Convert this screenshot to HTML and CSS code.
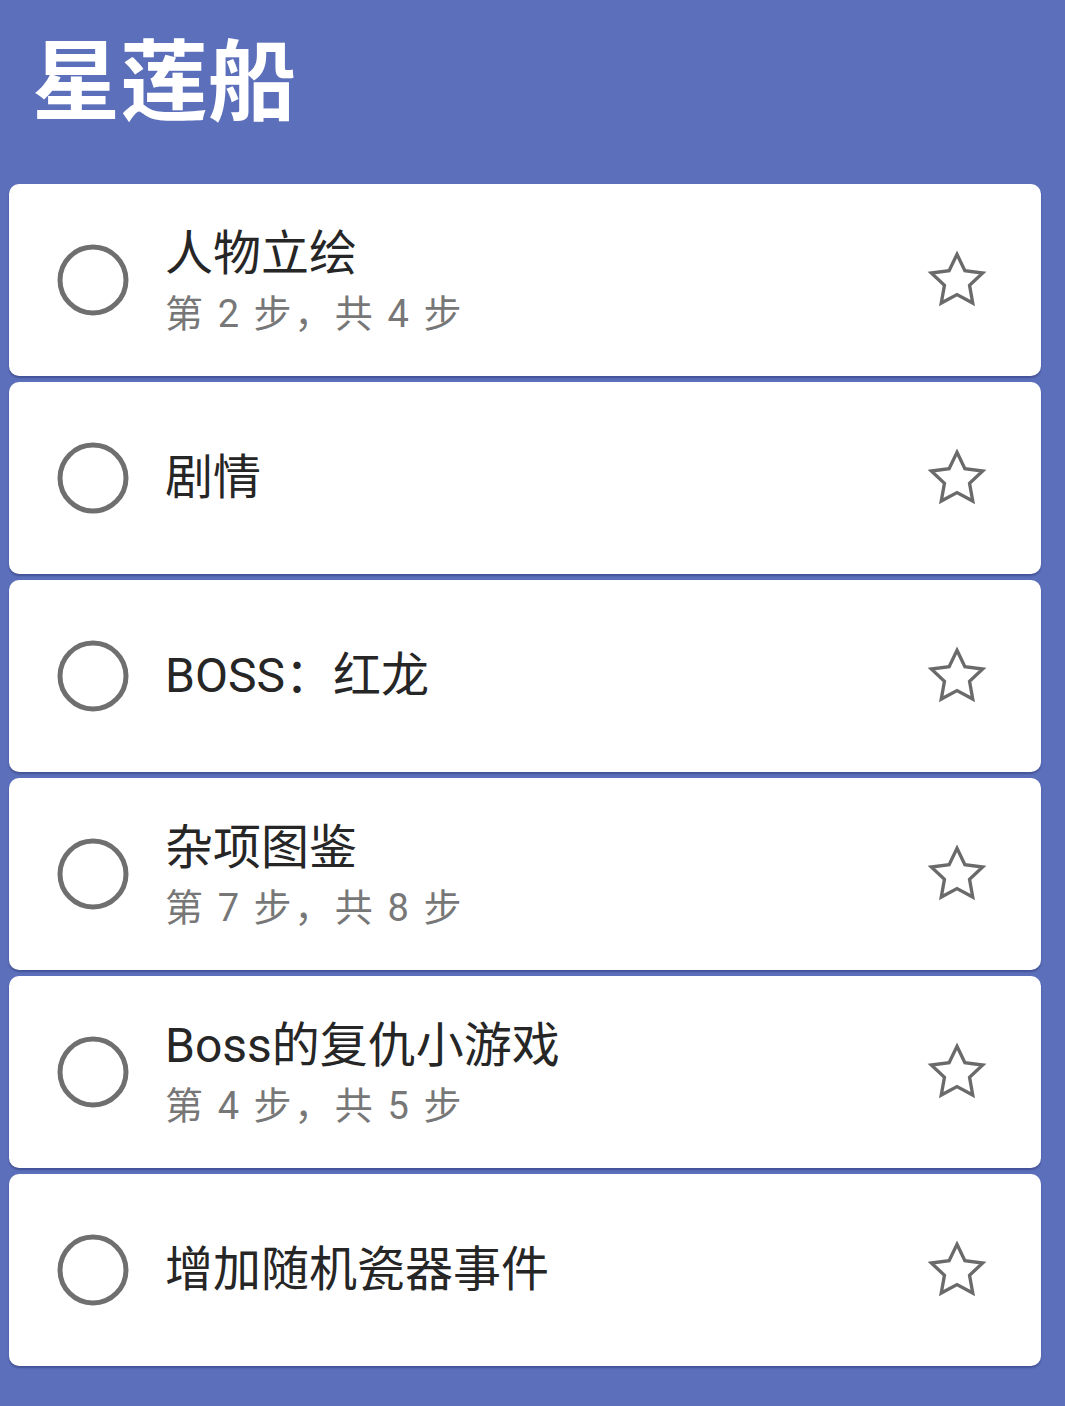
FILE: index.html
```html
<!DOCTYPE html>
<html lang="zh">
<head>
    <meta charset="UTF-8">
    <meta name="viewport" content="width=device-width, initial-scale=1.0">
    <title>星莲船</title>
    <link rel="stylesheet" href="styles.css">
</head>
<body>
    <header class="top-bar">
        <h1>星莲船</h1>
    </header>

    <div class="task-list">
        <div class="task-card">
            <svg class="check" viewBox="0 0 72 72"><circle cx="36" cy="36" r="33" /></svg>
            <div class="task-text">
                <div class="task-title">人物立绘</div>
                <div class="task-steps">第 2 步，共 4 步</div>
            </div>
            <svg class="star" viewBox="0 0 24 24"><path d="M12 3.2l2.7 5.6 6.1.8-4.5 4.2 1.1 6.1L12 17l-5.4 2.9 1.1-6.1-4.5-4.2 6.1-.8z" /></svg>
        </div>

        <div class="task-card">
            <svg class="check" viewBox="0 0 72 72"><circle cx="36" cy="36" r="33" /></svg>
            <div class="task-text">
                <div class="task-title">剧情</div>
            </div>
            <svg class="star" viewBox="0 0 24 24"><path d="M12 3.2l2.7 5.6 6.1.8-4.5 4.2 1.1 6.1L12 17l-5.4 2.9 1.1-6.1-4.5-4.2 6.1-.8z" /></svg>
        </div>

        <div class="task-card">
            <svg class="check" viewBox="0 0 72 72"><circle cx="36" cy="36" r="33" /></svg>
            <div class="task-text">
                <div class="task-title">BOSS：红龙</div>
            </div>
            <svg class="star" viewBox="0 0 24 24"><path d="M12 3.2l2.7 5.6 6.1.8-4.5 4.2 1.1 6.1L12 17l-5.4 2.9 1.1-6.1-4.5-4.2 6.1-.8z" /></svg>
        </div>

        <div class="task-card">
            <svg class="check" viewBox="0 0 72 72"><circle cx="36" cy="36" r="33" /></svg>
            <div class="task-text">
                <div class="task-title">杂项图鉴</div>
                <div class="task-steps">第 7 步，共 8 步</div>
            </div>
            <svg class="star" viewBox="0 0 24 24"><path d="M12 3.2l2.7 5.6 6.1.8-4.5 4.2 1.1 6.1L12 17l-5.4 2.9 1.1-6.1-4.5-4.2 6.1-.8z" /></svg>
        </div>

        <div class="task-card">
            <svg class="check" viewBox="0 0 72 72"><circle cx="36" cy="36" r="33" /></svg>
            <div class="task-text">
                <div class="task-title">Boss的复仇小游戏</div>
                <div class="task-steps">第 4 步，共 5 步</div>
            </div>
            <svg class="star" viewBox="0 0 24 24"><path d="M12 3.2l2.7 5.6 6.1.8-4.5 4.2 1.1 6.1L12 17l-5.4 2.9 1.1-6.1-4.5-4.2 6.1-.8z" /></svg>
        </div>

        <div class="task-card">
            <svg class="check" viewBox="0 0 72 72"><circle cx="36" cy="36" r="33" /></svg>
            <div class="task-text">
                <div class="task-title">增加随机瓷器事件</div>
            </div>
            <svg class="star" viewBox="0 0 24 24"><path d="M12 3.2l2.7 5.6 6.1.8-4.5 4.2 1.1 6.1L12 17l-5.4 2.9 1.1-6.1-4.5-4.2 6.1-.8z" /></svg>
        </div>
    </div>
</body>
</html>
```

FILE: styles.css
```css
body {
    font-family: Roboto, "Noto Sans CJK SC", sans-serif;
    background-color: #5c6fbb;
    margin: 0;
    padding: 0;
    height: 1406px;
    overflow: hidden;
}

.top-bar {
    height: 184px;
    box-sizing: border-box;
    padding: 19px 0 0 32px;
}

.top-bar h1 {
    margin: 0;
    color: #fff;
    font-family: "Noto Sans CJK SC", sans-serif;
    font-size: 88px;
    font-weight: 700;
    line-height: 112px;
}

.task-list {
    display: flex;
    flex-direction: column;
    gap: 6px;
    padding: 0 24px 0 9px;
}

.task-card {
    height: 192px;
    background-color: #fff;
    border-radius: 10px;
    box-shadow: 0 2px 2px rgba(20, 30, 80, 0.35);
    display: flex;
    align-items: center;
    padding: 0 49px 0 48px;
    box-sizing: border-box;
}

.check {
    width: 72px;
    height: 72px;
    flex-shrink: 0;
}

.check circle {
    fill: none;
    stroke: #6f6f6f;
    stroke-width: 5;
}

.task-text {
    flex: 1;
    margin-left: 36px;
}

.task-title {
    color: #262626;
    font-size: 48px;
    line-height: 68px;
}

.task-steps {
    color: #777;
    font-size: 38px;
    letter-spacing: 2.6px;
    line-height: 52px;
}

.star {
    width: 70px;
    height: 70px;
    flex-shrink: 0;
}

.star path {
    fill: none;
    stroke: #6a6a6a;
    stroke-width: 1.15;
    stroke-linejoin: miter;
}
```
